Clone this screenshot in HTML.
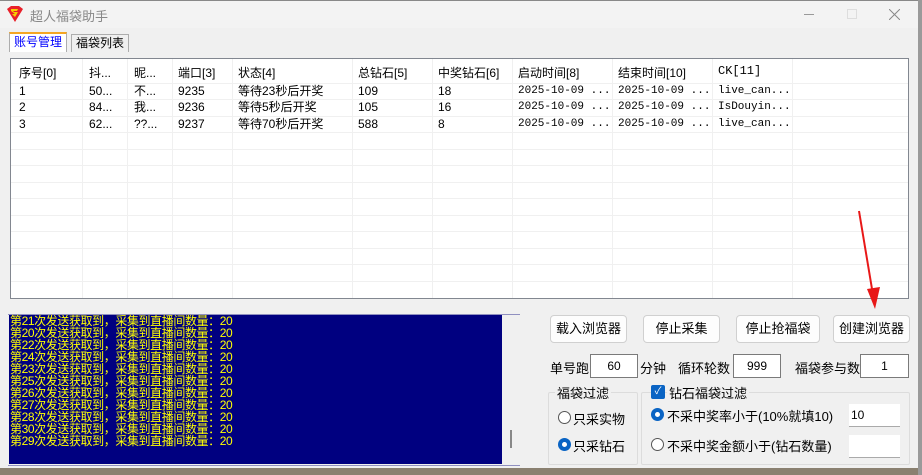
<!DOCTYPE html>
<html><head><meta charset="utf-8"><style>
*{margin:0;padding:0;box-sizing:border-box}
body{width:922px;height:475px;overflow:hidden;background:#f0f0f0;font-family:"Liberation Sans","Noto Sans CJK SC",sans-serif;font-size:12px;color:#000;position:relative}
.a{position:absolute}
.title{left:0;top:0;width:922px;height:28px;background:#f3f3f3;border-top:1px solid #888}
.tab{border:1px solid #adadad;border-bottom:none;background:#f0f0f0;height:18px;line-height:16px;padding:0 4px;font-size:12px}
.grid{left:10px;top:58px;width:899px;height:241px;background:#fff;border:1px solid #828790;overflow:hidden}
.col{top:0;height:241px;border-right:1px solid #f0f0f0}
.hd{top:5px;font-size:12px}
.row{position:absolute;left:0;width:899px;height:16px;line-height:16px;font-size:12px;white-space:nowrap}
.row span{position:absolute;top:0}
.mono{font-family:"Liberation Mono","Noto Sans CJK SC",monospace;font-size:11px}
.hline{left:0;width:899px;height:1px;background:#f0f0f0}
.log{left:9px;top:315px;width:493px;height:149px;background:#000080;color:#ff0;font-size:12px;line-height:12px;font-family:"Liberation Sans","Noto Sans CJK SC",sans-serif;padding-left:1px;letter-spacing:-0.4px}
.btn{height:28px;border:1px solid #d0d0d0;border-radius:4px;background:#fdfdfd;text-align:center;line-height:26px;font-size:13px}
.inp{background:#fff;border:1px solid #7a7a7a;text-align:center;font-size:12px;height:24px;line-height:22px}
.lbl{font-size:13px}
.grp{border:1px solid #dcdcdc;border-radius:2px}
.radio{width:13px;height:13px;border-radius:50%;border:1px solid #555;background:#fff}
.radio.on{border:4px solid #0a64c4;background:#fff}
</style></head><body>
<div class="a title"></div>
<svg class="a" style="left:6px;top:5px" width="18" height="18" viewBox="0 0 18 18"><path d="M1 4 L5 1 H13 L17 4 L9 17 Z" fill="#e8202a"/><path d="M5 4 H12 L11 6 H7 L8 7 H12 L9 12 L6 9 H9 L5 6 Z" fill="#f5d000"/></svg>
<div class="a" style="left:30px;top:6px;font-size:13px;color:#888">超人福袋助手</div>
<div class="a" style="left:804px;top:14px;width:10px;height:1px;background:#999"></div>
<div class="a" style="left:847px;top:9px;width:10px;height:10px;border:1px solid #ddd"></div>
<svg class="a" style="left:889px;top:9px" width="11" height="11"><path d="M0 0L11 11M11 0L0 11" stroke="#888" stroke-width="1"/></svg>
<div class="a tab" style="left:9px;top:32px;height:20px;background:#fff;color:#0000ff;border-top:2px solid #f5a623">账号管理</div>
<div class="a tab" style="left:71px;top:34px">福袋列表</div>
<div class="a grid">
 <div class="a hline" style="top:24px"></div>
 <div class="a hline" style="top:40px"></div>
 <div class="a hline" style="top:57px"></div>
 <div class="a hline" style="top:73px"></div>
 <div class="a hline" style="top:90px"></div>
 <div class="a hline" style="top:106px"></div>
 <div class="a hline" style="top:123px"></div>
 <div class="a hline" style="top:139px"></div>
 <div class="a hline" style="top:156px"></div>
 <div class="a hline" style="top:172px"></div>
 <div class="a hline" style="top:189px"></div>
 <div class="a hline" style="top:205px"></div>
 <div class="a hline" style="top:222px"></div>
 <div class="a col" style="left:0;width:72px"></div>
 <div class="a col" style="left:72px;width:45px"></div>
 <div class="a col" style="left:117px;width:45px"></div>
 <div class="a col" style="left:162px;width:60px"></div>
 <div class="a col" style="left:222px;width:120px"></div>
 <div class="a col" style="left:342px;width:80px"></div>
 <div class="a col" style="left:422px;width:80px"></div>
 <div class="a col" style="left:502px;width:100px"></div>
 <div class="a col" style="left:602px;width:100px"></div>
 <div class="a col" style="left:702px;width:80px"></div>
 <div class="a hd" style="left:8px">序号[0]</div>
 <div class="a hd" style="left:78px">抖...</div>
 <div class="a hd" style="left:123px">昵...</div>
 <div class="a hd" style="left:167px">端口[3]</div>
 <div class="a hd" style="left:227px">状态[4]</div>
 <div class="a hd" style="left:347px">总钻石[5]</div>
 <div class="a hd" style="left:427px">中奖钻石[6]</div>
 <div class="a hd" style="left:507px">启动时间[8]</div>
 <div class="a hd" style="left:607px">结束时间[10]</div>
 <div class="a hd mono" style="left:707px;font-size:12px">CK[11]</div>
 <div class="row" style="top:24px"><span style="left:8px">1</span><span style="left:78px">50...</span><span style="left:123px">不...</span><span style="left:167px">9235</span><span style="left:227px">等待23秒后开奖</span><span style="left:347px">109</span><span style="left:427px">18</span><span class="mono" style="left:507px">2025-10-09 ...</span><span class="mono" style="left:607px">2025-10-09 ...</span><span class="mono" style="left:707px">live_can...</span></div>
 <div class="row" style="top:40px"><span style="left:8px">2</span><span style="left:78px">84...</span><span style="left:123px">我...</span><span style="left:167px">9236</span><span style="left:227px">等待5秒后开奖</span><span style="left:347px">105</span><span style="left:427px">16</span><span class="mono" style="left:507px">2025-10-09 ...</span><span class="mono" style="left:607px">2025-10-09 ...</span><span class="mono" style="left:707px">IsDouyin...</span></div>
 <div class="row" style="top:57px"><span style="left:8px">3</span><span style="left:78px">62...</span><span style="left:123px">??...</span><span style="left:167px">9237</span><span style="left:227px">等待70秒后开奖</span><span style="left:347px">588</span><span style="left:427px">8</span><span class="mono" style="left:507px">2025-10-09 ...</span><span class="mono" style="left:607px">2025-10-09 ...</span><span class="mono" style="left:707px">live_can...</span></div>
</div>
<div class="a" style="left:8px;top:314px;width:512px;height:152px;background:#f0f0f0;border-top:1px solid #9090c0;border-bottom:1px solid #9090c0"></div>
<div class="a" style="left:510px;top:430px;width:2px;height:18px;background:#888"></div>
<div class="a log">第21次发送获取到，采集到直播间数量：20<br>第20次发送获取到，采集到直播间数量：20<br>第22次发送获取到，采集到直播间数量：20<br>第24次发送获取到，采集到直播间数量：20<br>第23次发送获取到，采集到直播间数量：20<br>第25次发送获取到，采集到直播间数量：20<br>第26次发送获取到，采集到直播间数量：20<br>第27次发送获取到，采集到直播间数量：20<br>第28次发送获取到，采集到直播间数量：20<br>第30次发送获取到，采集到直播间数量：20<br>第29次发送获取到，采集到直播间数量：20</div>
<div class="a btn" style="left:550px;top:315px;width:77px">载入浏览器</div>
<div class="a btn" style="left:643px;top:315px;width:77px">停止采集</div>
<div class="a btn" style="left:736px;top:315px;width:84px">停止抢福袋</div>
<div class="a btn" style="left:833px;top:315px;width:77px">创建浏览器</div>
<div class="a lbl" style="left:550px;top:358px">单号跑</div>
<div class="a inp" style="left:590px;top:354px;width:48px">60</div>
<div class="a lbl" style="left:640px;top:358px">分钟</div>
<div class="a lbl" style="left:678px;top:358px">循环轮数</div>
<div class="a inp" style="left:733px;top:354px;width:48px">999</div>
<div class="a lbl" style="left:795px;top:358px">福袋参与数</div>
<div class="a inp" style="left:860px;top:354px;width:49px">1</div>
<div class="a grp" style="left:548px;top:392px;width:90px;height:73px"></div>
<div class="a lbl" style="left:555px;top:383px;background:#f0f0f0;padding:0 2px">福袋过滤</div>
<div class="a radio" style="left:558px;top:411px"></div>
<div class="a lbl" style="left:573px;top:409px">只采实物</div>
<div class="a radio on" style="left:558px;top:438px"></div>
<div class="a lbl" style="left:573px;top:436px">只采钻石</div>
<div class="a grp" style="left:641px;top:392px;width:269px;height:73px"></div>
<div class="a" style="left:651px;top:385px;width:14px;height:14px;background:#0a64c4;border-radius:2px;color:#fff;font-size:10px;line-height:14px;text-align:center">✓</div>
<div class="a lbl" style="left:667px;top:383px;background:#f0f0f0;padding:0 2px">钻石福袋过滤</div>
<div class="a radio on" style="left:651px;top:408px"></div>
<div class="a lbl" style="left:667px;top:406px">不采中奖率小于(10%就填10)</div>
<div class="a" style="left:849px;top:404px;width:51px;height:23px;background:#fff;border-bottom:1px solid #aaa;font-size:12px;line-height:22px;padding-left:2px">10</div>
<div class="a radio" style="left:651px;top:438px"></div>
<div class="a lbl" style="left:667px;top:436px">不采中奖金额小于(钻石数量)</div>
<div class="a" style="left:849px;top:435px;width:51px;height:23px;background:#fff;border-bottom:1px solid #aaa"></div>
<div class="a" style="left:0;top:468px;width:922px;height:7px;background:#8a8070"></div>
<div class="a" style="left:918px;top:0;width:4px;height:475px;background:#9a9a9a"></div>
<svg class="a" style="left:850px;top:205px" width="40" height="110"><line x1="9" y1="6" x2="23" y2="90" stroke="#e81818" stroke-width="2"/><path d="M17 84 L25 104 L30 82 Z" fill="#e81818"/></svg>
</body></html>
